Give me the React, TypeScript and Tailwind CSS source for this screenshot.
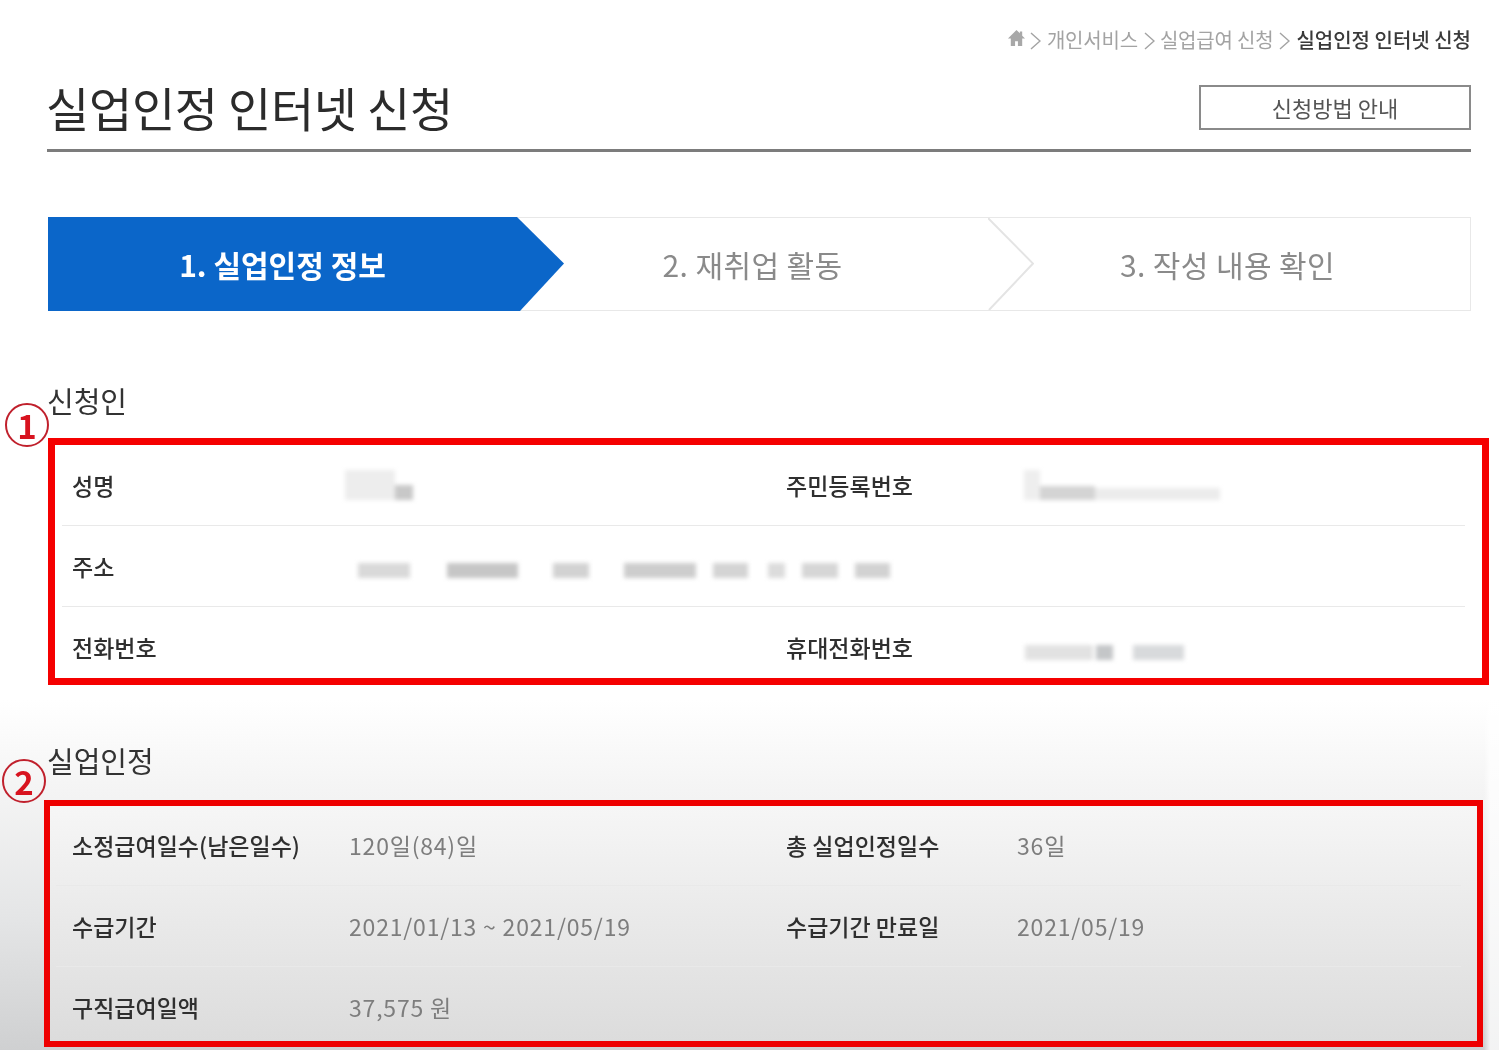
import React from "react";

function Row({
  children,
  className = "",
}: {
  children: React.ReactNode;
  className?: string;
}) {
  return (
    <div className={`flex items-center border-[#e9e9e9] text-[23px] ${className}`}>
      {children}
    </div>
  );
}

function Label({ children, wide }: { children?: React.ReactNode; wide?: boolean }) {
  return (
    <div
      className={`shrink-0 whitespace-nowrap font-medium text-[#2f2f2f] ${
        wide ? "w-[231px]" : "w-[277px]"
      }`}
    >
      {children}
    </div>
  );
}

function Value({ children, wide }: { children?: React.ReactNode; wide?: boolean }) {
  return (
    <div
      className={`shrink-0 whitespace-nowrap tracking-[0.8px] text-[#7d7d7d] ${wide ? "w-[437px]" : ""}`}
    >
      {children}
    </div>
  );
}

function Circled({ children, className }: { children: React.ReactNode; className: string }) {
  return (
    <div
      className={`absolute flex h-[44px] w-[44px] items-center justify-center rounded-full border-2 border-[#c0202c] text-[33px] font-bold leading-none text-[#d8131f] ${className}`}
    >
      {children}
    </div>
  );
}

function Chevron({ className }: { className: string }) {
  return (
    <svg viewBox="0 0 11 18" className={`h-[18px] w-[11px] shrink-0 fill-none stroke-[#a3a3a3] stroke-[1.4] ${className}`}>
      <path d="M1 1l9 8-9 8" />
    </svg>
  );
}

export default function App() {
  return (
    <div
      className="h-[1050px] w-[1499px] overflow-hidden bg-[linear-gradient(90deg,transparent_1484px,rgba(255,255,255,0.75)_1490px),linear-gradient(180deg,#ffffff_0px,#ffffff_700px,#f4f4f4_790px,#e4e5e6_920px,#cfd0d1_1050px)] pl-[47px] blur-[0.7px]"
      style={{ fontFamily: '"Noto Sans CJK KR", "Noto Sans", sans-serif' }}
    >
      {/* Breadcrumb */}
      <div className="flex h-[80px] w-[1424px] items-start justify-end pt-[25px] text-[20px] leading-[30px] text-[#a3a3a3]">
        <svg viewBox="0 0 20 20" className="mt-[4px] h-[19px] w-[19px] fill-[#a8a8a8]">
          <path d="M10 1 1 10h3v8h4.5v-5h3v5H16v-8h3l-3-3V2.5h-2.5v2z" />
        </svg>
        <Chevron className="ml-[4px] mr-[6px] mt-[7px]" />
        <span className="tracking-[-0.2px]">개인서비스</span>
        <Chevron className="ml-[6px] mr-[5px] mt-[7px]" />
        <span className="tracking-[-0.2px]">실업급여 신청</span>
        <Chevron className="ml-[6px] mr-[6px] mt-[7px]" />
        <span className="font-medium text-[#3a3a3a]">실업인정 인터넷 신청</span>
      </div>

      {/* Title */}
      <div className="flex h-[72px] w-[1424px] items-start justify-between border-b-[3px] border-[#7c7c7c]">
        <h1 className="ml-[-1px] text-[47px] font-normal leading-[53px] tracking-[-0.3px] text-[#2b2b2b]">
          실업인정 인터넷 신청
        </h1>
        <button className="mt-[5px] h-[45px] w-[272px] border-2 border-[#8a8a8a] bg-white text-[22px] text-[#555555]">
          신청방법 안내
        </button>
      </div>

      {/* Steps */}
      <div className="ml-px mt-[65px] flex h-[94px] w-[1423px] text-[30px]">
        <div className="relative flex w-[469px] items-center justify-center bg-[#0b66c9] font-bold text-white">
          1. 실업인정 정보
          <svg viewBox="0 0 48 95" preserveAspectRatio="none" className="absolute left-full top-0 z-10 h-full w-[48px] fill-[#0b66c9]">
            <path d="M0 0 47 47 3 95H0z" />
          </svg>
        </div>
        <div className="relative flex w-[471px] items-center justify-center border-y border-[#e8e8e8] tracking-[0.4px] text-[#8a8a8a]">
          2. 재취업 활동
          <svg viewBox="0 0 46 95" preserveAspectRatio="none" className="absolute left-full top-0 h-full w-[46px] fill-none stroke-[#e4e4e4] stroke-2">
            <path d="M0 0 45 47 1 95" />
          </svg>
        </div>
        <div className="flex flex-1 items-center justify-center border-y border-r border-[#e8e8e8] pr-[3px] tracking-[0.4px] text-[#8a8a8a]">
          3. 작성 내용 확인
        </div>
      </div>

      {/* 신청인 */}
      <section className="relative mt-[69px]">
        <h2 className="h-[58px] text-[29px] font-normal leading-[40px] text-[#333333]">신청인</h2>
        <Circled className="left-[-42px] top-[23px]">1</Circled>
        <div className="ml-px h-[247px] w-[1441px] border-[7px] border-[#f50000] bg-white">
          <Row className="ml-[7px] mr-[17px] h-[81px] border-b pl-[10px]">
            <Label>성명</Label>
            <Value wide>
              <div className="ml-[-4px] flex items-end blur-[2px]">
                <span className="h-[30px] w-[50px] bg-[#ededed]" />
                <span className="h-[15px] w-[18px] bg-[#c8c8c8]" />
              </div>
            </Value>
            <Label wide>주민등록번호</Label>
            <Value>
              <div className="ml-[7px] flex items-end blur-[2px]">
                <span className="h-[30px] w-[16px] bg-[#eeeeee]" />
                <span className="h-[14px] w-[55px] bg-[#d4d4d4]" />
                <span className="h-[12px] w-[125px] bg-[#ececec]" />
              </div>
            </Value>
          </Row>
          <Row className="ml-[7px] mr-[17px] h-[81px] border-b pl-[10px]">
            <Label>주소</Label>
            <Value>
              <div className="mt-[8px] flex items-center blur-[2px]">
                <span className="ml-[9px] h-[15px] w-[52px] bg-[#d9d9d9]" />
                <span className="ml-[37px] h-[15px] w-[71px] bg-[#c6c6c6]" />
                <span className="ml-[35px] h-[15px] w-[36px] bg-[#d2d2d2]" />
                <span className="ml-[35px] h-[15px] w-[72px] bg-[#cdcdcd]" />
                <span className="ml-[17px] h-[15px] w-[35px] bg-[#d4d4d4]" />
                <span className="ml-[20px] h-[15px] w-[17px] bg-[#dcdcdc]" />
                <span className="ml-[17px] h-[15px] w-[36px] bg-[#d6d6d6]" />
                <span className="ml-[17px] h-[15px] w-[35px] bg-[#d2d2d2]" />
              </div>
            </Value>
          </Row>
          <Row className="ml-[7px] mr-[17px] h-[71px] pl-[10px] pt-[10px]">
            <Label>전화번호</Label>
            <Value wide />
            <Label wide>휴대전화번호</Label>
            <Value>
              <div className="ml-[8px] mt-[9px] flex items-center blur-[2px]">
                <span className="h-[15px] w-[68px] bg-[#e2e2e2]" />
                <span className="ml-[3px] h-[15px] w-[17px] bg-[#c4c6c8]" />
                <span className="ml-[20px] h-[15px] w-[51px] bg-[#d8dadc]" />
              </div>
            </Value>
          </Row>
        </div>
      </section>

      {/* 실업인정 */}
      <section className="relative mt-[55px]">
        <h2 className="h-[60px] text-[29px] font-normal leading-[40px] text-[#333333]">실업인정</h2>
        <Circled className="left-[-45px] top-[19px]">2</Circled>
        <div className="ml-[-3px] h-[247px] w-[1439px] border-[6px] border-[#ee0000] bg-[linear-gradient(180deg,#f6f6f6,#dcdcdc)]">
          <Row className="ml-[6px] mr-[16px] h-[80px] border-b border-[#e2e2e2] pl-[16px]">
            <Label>소정급여일수(남은일수)</Label>
            <Value wide>120일(84)일</Value>
            <Label wide>총 실업인정일수</Label>
            <Value>36일</Value>
          </Row>
          <Row className="ml-[6px] mr-[16px] h-[81px] border-b border-[#dcdcdc] pl-[16px]">
            <Label>수급기간</Label>
            <Value wide>2021/01/13 ~ 2021/05/19</Value>
            <Label wide>수급기간 만료일</Label>
            <Value>2021/05/19</Value>
          </Row>
          <Row className="ml-[6px] mr-[16px] h-[74px] pl-[16px] pt-[6px]">
            <Label>구직급여일액</Label>
            <Value wide>37,575 원</Value>
          </Row>
        </div>
      </section>
    </div>
  );
}
